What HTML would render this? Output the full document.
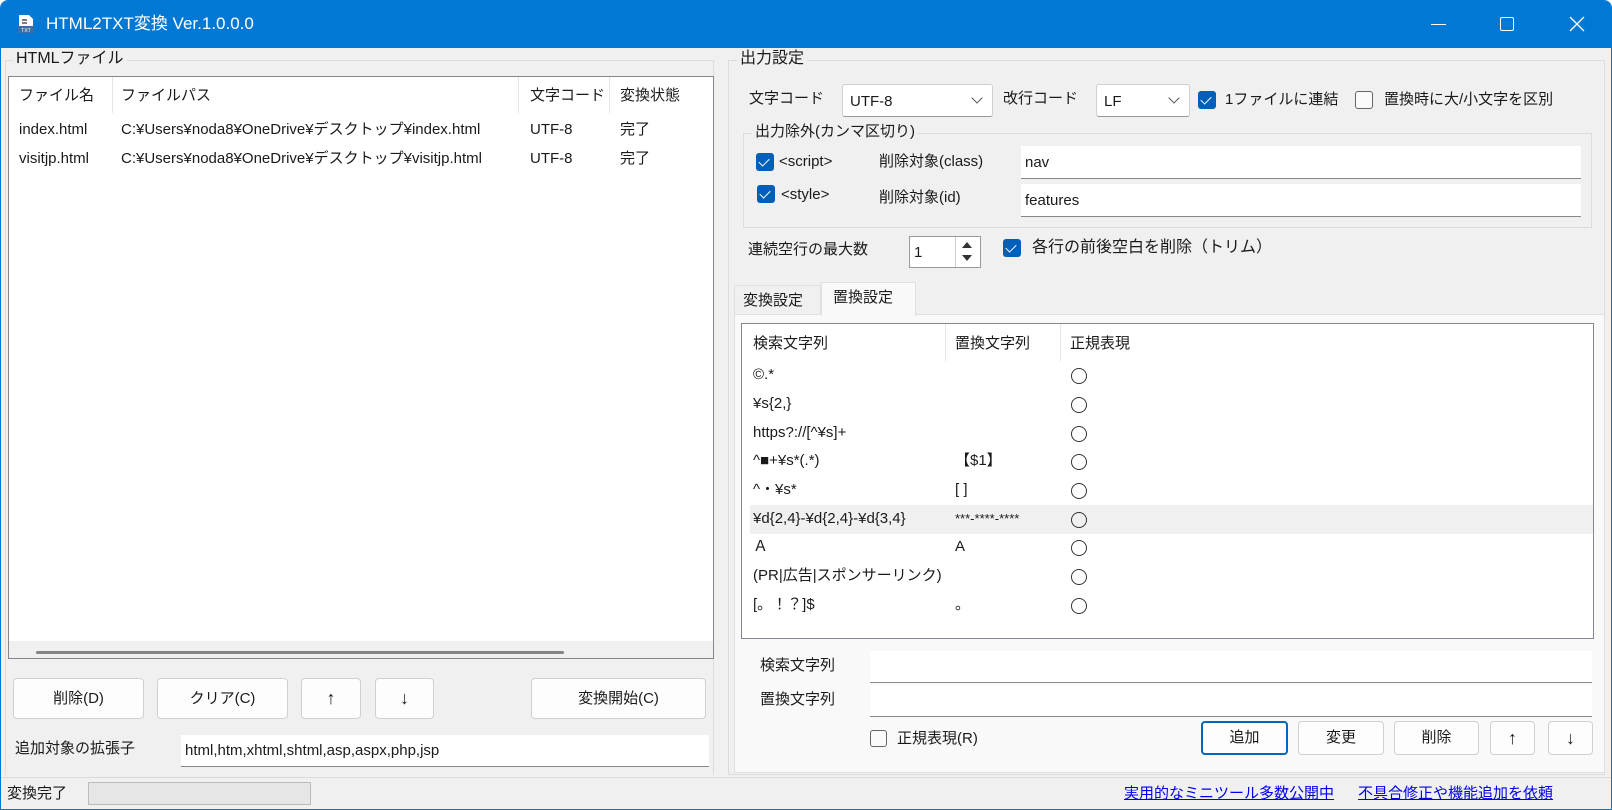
<!DOCTYPE html>
<html><head><meta charset="utf-8"><style>
*{box-sizing:border-box;margin:0;padding:0}
body{width:1612px;height:810px;overflow:hidden;background:#fff;font-family:"Liberation Sans","Noto Sans CJK JP",sans-serif;font-size:15px;line-height:20px;color:#1a1a1a;position:relative}
.a{position:absolute;white-space:nowrap}
.win{position:absolute;left:0;top:0;width:1612px;height:810px;background:#f0f0f0;border:1px solid #0078d4;border-radius:8px 8px 0 0;overflow:hidden}
.title{position:absolute;left:0;top:0;width:1612px;height:47px;background:#0078d4;color:#fff}
.grp{position:absolute;border:1px solid #dcdcdc}
.lbl{position:absolute;background:#f0f0f0;padding:0 3px;line-height:18px}
.lv{position:absolute;background:#fff;border:1px solid #828790}
.btn{position:absolute;background:#fdfdfd;border:1px solid #d0d0d0;border-radius:4px;text-align:center;font-size:15px}
.inp{position:absolute;background:#fff;border-bottom:1px solid #888}
.cb{position:absolute;width:18px;height:18px;border-radius:3px;background:#005fb8}
.cb::after{content:"";position:absolute;left:5px;top:3px;width:5px;height:9px;border:solid #fff;border-width:0 1.5px 1.5px 0;transform:rotate(45deg)}
.cbo{position:absolute;width:18px;height:18px;border-radius:3px;border:1px solid #666;background:#fafafa}
.sep{position:absolute;width:1px;background:#e5e5e5}
.rad{position:absolute;width:16px;height:16px;border-radius:50%;border:1.5px solid #333}
.combo{position:absolute;background:#fff;border:1px solid #d0d0d0;border-bottom-color:#999;border-radius:3px}
.chev{position:absolute;width:8px;height:8px;border:solid #555;border-width:0 1px 1px 0;transform:rotate(45deg)}
</style></head><body>
<div class="win">
<div class="title">
 <svg class="a" style="left:16px;top:13px" width="18" height="20" viewBox="0 0 18 20"><path d="M2 1h10l4 4v14H2z" fill="#fff"/><path d="M5 6h5M5 9h5" stroke="#333" stroke-width="1.3"/><rect x="1" y="12" width="16" height="7" fill="#3b6ea5"/><text x="9" y="18" font-size="5" fill="#fff" text-anchor="middle" font-family="Liberation Sans">TXT</text></svg>
 <div class="a" style="left:45px;top:13px;font-size:17px;color:#fff">HTML2TXT変換 Ver.1.0.0.0</div>
 <div class="a" style="left:1430px;top:23px;width:15px;height:1px;background:#fff"></div>
 <div class="a" style="left:1499px;top:16px;width:14px;height:14px;border:1.3px solid #fff;border-radius:2px"></div>
 <svg class="a" style="left:1568px;top:15px" width="16" height="16"><path d="M1 1L15 15M15 1L1 15" stroke="#fff" stroke-width="1.3"/></svg>
</div>

<div class="grp" style="left:4px;top:59px;width:709px;height:715px;border-bottom:none"></div>
<div class="lbl" style="left:12px;top:49px;font-size:16px">HTMLファイル</div>
<div class="lv" style="left:7px;top:75px;width:706px;height:583px">
 <div class="a" style="left:10px;top:9px">ファイル名</div>
 <div class="sep" style="left:103px;top:0;height:36px"></div>
 <div class="a" style="left:112px;top:9px">ファイルパス</div>
 <div class="sep" style="left:509px;top:0;height:36px"></div>
 <div class="a" style="left:521px;top:9px">文字コード</div>
 <div class="sep" style="left:600px;top:0;height:36px"></div>
 <div class="a" style="left:611px;top:9px">変換状態</div>
 <div class="a" style="left:10px;top:43px">index.html</div>
 <div class="a" style="left:112px;top:43px">C:¥Users¥noda8¥OneDrive¥デスクトップ¥index.html</div>
 <div class="a" style="left:521px;top:43px">UTF-8</div>
 <div class="a" style="left:611px;top:43px">完了</div>
 <div class="a" style="left:10px;top:72px">visitjp.html</div>
 <div class="a" style="left:112px;top:72px">C:¥Users¥noda8¥OneDrive¥デスクトップ¥visitjp.html</div>
 <div class="a" style="left:521px;top:72px">UTF-8</div>
 <div class="a" style="left:611px;top:72px">完了</div>
 <div class="a" style="left:0;top:564px;width:704px;height:17px;background:#f0f0f0"></div>
 <div class="a" style="left:27px;top:574px;width:528px;height:3px;background:#858585;border-radius:2px"></div>
</div>
<div class="btn" style="left:12px;top:677px;width:131px;height:41px;line-height:39px">削除(D)</div>
<div class="btn" style="left:156px;top:677px;width:131px;height:41px;line-height:39px">クリア(C)</div>
<div class="btn" style="left:300px;top:677px;width:60px;height:41px;line-height:39px;font-size:18px">↑</div>
<div class="btn" style="left:374px;top:677px;width:59px;height:41px;line-height:39px;font-size:18px">↓</div>
<div class="btn" style="left:530px;top:677px;width:175px;height:41px;line-height:39px">変換開始(C)</div>
<div class="a" style="left:14px;top:738px;font-size:15px">追加対象の拡張子</div>
<div class="inp" style="left:180px;top:734px;width:528px;height:32px;padding:6px 4px">html,htm,xhtml,shtml,asp,aspx,php,jsp</div>

<div class="grp" style="left:727px;top:59px;width:877px;height:715px"></div>
<div class="lbl" style="left:736px;top:49px;font-size:16px">出力設定</div>
<div class="a" style="left:748px;top:88px">文字コード</div>
<div class="combo" style="left:841px;top:83px;width:151px;height:33px"><span class="a" style="left:7px;top:7px">UTF-8</span><div class="chev" style="left:130px;top:9px"></div></div>
<div class="a" style="left:1002px;top:88px">改行コード</div>
<div class="combo" style="left:1095px;top:83px;width:94px;height:33px"><span class="a" style="left:7px;top:7px">LF</span><div class="chev" style="left:73px;top:9px"></div></div>
<div class="cb" style="left:1197px;top:90px"></div>
<div class="a" style="left:1224px;top:89px">1ファイルに連結</div>
<div class="cbo" style="left:1354px;top:90px"></div>
<div class="a" style="left:1383px;top:89px">置換時に大/小文字を区別</div>

<div class="grp" style="left:742px;top:132px;width:849px;height:95px"></div>
<div class="lbl" style="left:751px;top:122px">出力除外(カンマ区切り)</div>
<div class="cb" style="left:755px;top:152px"></div>
<div class="a" style="left:778px;top:151px">&lt;script&gt;</div>
<div class="a" style="left:878px;top:151px">削除対象(class)</div>
<div class="inp" style="left:1020px;top:145px;width:560px;height:33px;padding:7px 4px">nav</div>
<div class="cb" style="left:756px;top:184px"></div>
<div class="a" style="left:780px;top:184px">&lt;style&gt;</div>
<div class="a" style="left:878px;top:187px">削除対象(id)</div>
<div class="inp" style="left:1020px;top:183px;width:560px;height:33px;padding:7px 4px">features</div>

<div class="a" style="left:747px;top:239px">連続空行の最大数</div>
<div class="a" style="left:908px;top:235px;width:72px;height:32px;background:#fff;border:1px solid #999"><span class="a" style="left:4px;top:6px">1</span>
 <div class="a" style="left:45px;top:0;width:1px;height:30px;background:#ccc"></div>
 <div class="a" style="left:52px;top:5px;width:0;height:0;border:5px solid transparent;border-bottom:6px solid #333;border-top:0"></div>
 <div class="a" style="left:52px;top:18px;width:0;height:0;border:5px solid transparent;border-top:6px solid #333;border-bottom:0"></div>
</div>
<div class="cb" style="left:1002px;top:238px"></div>
<div class="a" style="left:1031px;top:237px;font-size:16px">各行の前後空白を削除（トリム）</div>

<div class="a" style="left:733px;top:284px;width:87px;height:30px;background:#f0f0f0;border:1px solid #e0e0e0;border-bottom:none"></div>
<div class="a" style="left:742px;top:290px">変換設定</div>
<div class="a" style="left:733px;top:313px;width:871px;height:459px;background:#f9f9f9;border:1px solid #e0e0e0"></div>
<div class="a" style="left:820px;top:281px;width:95px;height:34px;background:#f9f9f9;border:1px solid #e0e0e0;border-bottom:none"></div>
<div class="a" style="left:832px;top:287px">置換設定</div>

<div class="lv" style="left:740px;top:322px;width:853px;height:316px">
 <div class="a" style="left:11px;top:10px">検索文字列</div>
 <div class="sep" style="left:203px;top:0;height:37px"></div>
 <div class="a" style="left:213px;top:10px">置換文字列</div>
 <div class="sep" style="left:318px;top:0;height:37px"></div>
 <div class="a" style="left:328px;top:10px">正規表現</div>
 <div class="a" style="left:8px;top:181px;width:843px;height:29px;background:#f0f0f0"></div>
 <div class="a" style="left:11px;top:41px">©.*</div>
 <div class="a" style="left:11px;top:70px">¥s{2,}</div>
 <div class="a" style="left:11px;top:99px">https?://[^¥s]+</div>
 <div class="a" style="left:11px;top:127px">^■+¥s*(.*)</div><div class="a" style="left:213px;top:127px">【$1】</div>
 <div class="a" style="left:11px;top:156px">^・¥s*</div><div class="a" style="left:213px;top:156px">[ ]</div>
 <div class="a" style="left:11px;top:185px">¥d{2,4}-¥d{2,4}-¥d{3,4}</div><div class="a" style="left:213px;top:185px;font-size:13px">***-****-****</div>
 <div class="a" style="left:11px;top:213px">Ａ</div><div class="a" style="left:213px;top:213px">A</div>
 <div class="a" style="left:11px;top:242px">(PR|広告|スポンサーリンク)</div>
 <div class="a" style="left:11px;top:271px">[。！？]$</div><div class="a" style="left:213px;top:271px">。</div>
 <div class="rad" style="left:329px;top:44px"></div>
 <div class="rad" style="left:329px;top:73px"></div>
 <div class="rad" style="left:329px;top:102px"></div>
 <div class="rad" style="left:329px;top:130px"></div>
 <div class="rad" style="left:329px;top:159px"></div>
 <div class="rad" style="left:329px;top:188px"></div>
 <div class="rad" style="left:329px;top:216px"></div>
 <div class="rad" style="left:329px;top:245px"></div>
 <div class="rad" style="left:329px;top:274px"></div>
</div>
<div class="a" style="left:759px;top:655px">検索文字列</div>
<div class="inp" style="left:869px;top:650px;width:722px;height:32px"></div>
<div class="a" style="left:759px;top:689px">置換文字列</div>
<div class="inp" style="left:869px;top:684px;width:722px;height:32px"></div>
<div class="cbo" style="left:869px;top:729px;width:17px;height:17px"></div>
<div class="a" style="left:896px;top:728px">正規表現(R)</div>
<div class="btn" style="left:1200px;top:720px;width:87px;height:34px;line-height:30px;border:2px solid #0067c0">追加</div>
<div class="btn" style="left:1297px;top:720px;width:86px;height:34px;line-height:32px">変更</div>
<div class="btn" style="left:1393px;top:720px;width:85px;height:34px;line-height:32px">削除</div>
<div class="btn" style="left:1489px;top:720px;width:45px;height:34px;line-height:32px;font-size:18px">↑</div>
<div class="btn" style="left:1547px;top:720px;width:45px;height:34px;line-height:32px;font-size:18px">↓</div>

<div class="a" style="left:0;top:776px;width:1612px;height:1px;background:#dcdcdc"></div>
<div class="a" style="left:6px;top:783px">変換完了</div>
<div class="a" style="left:87px;top:781px;width:223px;height:23px;background:#e6e6e6;border:1px solid #bcbcbc"></div>
<div class="a" style="left:1123px;top:783px;color:#0000ee;text-decoration:underline">実用的なミニツール多数公開中</div>
<div class="a" style="left:1357px;top:783px;color:#0000ee;text-decoration:underline">不具合修正や機能追加を依頼</div>
</div>
</body></html>
